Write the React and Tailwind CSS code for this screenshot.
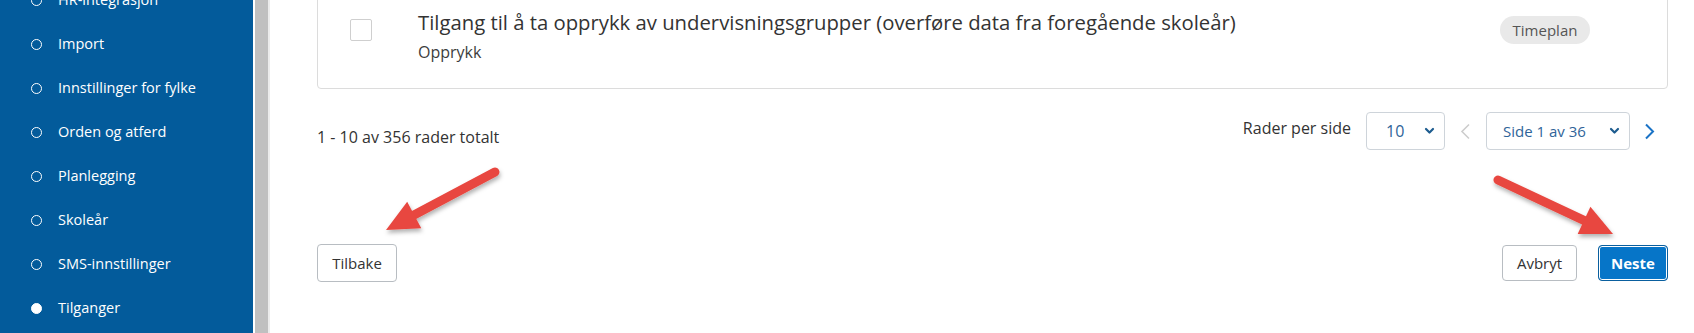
import React from 'react'

const navItems = [
  { label: 'HR-integrasjon' },
  { label: 'Import' },
  { label: 'Innstillinger for fylke' },
  { label: 'Orden og atferd' },
  { label: 'Planlegging' },
  { label: 'Skoleår' },
  { label: 'SMS-innstillinger' },
  { label: 'Tilganger', active: true },
]

// red annotation arrow, from tail to tip
const Arrow = ({ from, to }) => {
  const dx = to[0] - from[0]
  const dy = to[1] - from[1]
  const len = Math.hypot(dx, dy)
  const ux = dx / len
  const uy = dy / len
  const headLen = 32
  const halfW = 15
  const bx = to[0] - ux * headLen
  const by = to[1] - uy * headLen
  const nx = -uy
  const ny = ux
  const lineEnd = [to[0] - ux * (headLen - 4), to[1] - uy * (headLen - 4)]
  return (
    <g filter="url(#arrowShadow)">
      <line
        x1={from[0]}
        y1={from[1]}
        x2={lineEnd[0]}
        y2={lineEnd[1]}
        stroke="#e8473f"
        strokeWidth="9"
        strokeLinecap="round"
      />
      <polygon
        points={`${to[0]},${to[1]} ${bx + nx * halfW},${by + ny * halfW} ${bx - nx * halfW},${by - ny * halfW}`}
        fill="#e8473f"
      />
    </g>
  )
}

const SmallChevron = () => (
  <svg width="11" height="8" viewBox="0 0 11 8" className="shrink-0">
    <polyline points="2,2 5.5,5.5 9,2" fill="none" stroke="#1d5c8f" strokeWidth="2.2" strokeLinecap="round" strokeLinejoin="round" />
  </svg>
)

const Select = ({ value, className }) => (
  <div
    className={`h-[38px] flex items-center justify-between border border-[#ced4da] rounded-[4px] bg-white text-[#2f6499] ${className}`}
  >
    <span>{value}</span>
    <SmallChevron />
  </div>
)

const App = () => {
  return (
    <div className="relative flex h-[333px] w-[1694px] overflow-hidden bg-white font-['Open_Sans',sans-serif] text-[#333]">
      <aside className="w-[253px] shrink-0 bg-[#035b9b] text-white">
        <ul className="mt-[-22px]">
          {navItems.map((item) => (
            <li key={item.label} className="h-[44px] flex items-center pl-[31px] text-[14.5px]">
              <span
                className={`w-[11px] h-[11px] rounded-full border-[1.5px] border-white ${item.active ? 'bg-white' : ''}`}
              />
              <span className="ml-[16px]">{item.label}</span>
            </li>
          ))}
        </ul>
      </aside>
      <div className="w-[2px] shrink-0 bg-white" />
      <div className="w-[13px] shrink-0 bg-[#c0c0c0]" />
      <div className="w-[2px] shrink-0 bg-[#ececec]" />

      <main className="flex-1 flex flex-col pl-[47px] pr-[26px]">
        <div className="mt-[-20px] flex items-start border border-[#dcdcdc] rounded-[4px] pt-[28px] pb-[25px] pl-[32px] pr-[77px]">
          <div className="mt-[10px] w-[22px] h-[22px] shrink-0 border border-[#cfcfcf] rounded-[2px] bg-white" />
          <div className="ml-[46px] flex-1">
            <p className="text-[20.3px] leading-[26px] text-[#333]">
              Tilgang til å ta opprykk av undervisningsgrupper (overføre data fra foregående skoleår)
            </p>
            <p className="mt-[6px] text-[16px] leading-[22px] text-[#3d3d3d]">Opprykk</p>
          </div>
          <span className="mt-[7px] h-[28px] w-[90px] flex items-center justify-center rounded-full bg-[#e9e9e9] text-[15px] text-[#555]">
            Timeplan
          </span>
        </div>

        <div className="mt-[23px] flex justify-between items-start h-[38px]">
          <p className="mt-[14px] text-[16px] leading-[22px] text-[#333]">1 - 10 av 356 rader totalt</p>
          <div className="flex items-center pr-[13px]">
            <span className="text-[16px] text-[#333] mt-[-6px]">Rader per side</span>
            <Select value="10" className="ml-[15px] w-[79px] pl-[19px] pr-[9px] text-[16px]" />
            <svg width="11" height="17" viewBox="0 0 11 17" className="ml-[15px]">
              <polyline points="9,1.5 2,8.5 9,15.5" fill="none" stroke="#cdcdcd" strokeWidth="1.6" />
            </svg>
            <Select value="Side 1 av 36" className="ml-[15px] w-[144px] pl-[16px] pr-[9px] text-[15px]" />
            <svg width="11" height="17" viewBox="0 0 11 17" className="ml-[14px]">
              <polyline points="2,1.5 9,8.5 2,15.5" fill="none" stroke="#1a73c6" strokeWidth="2" />
            </svg>
          </div>
        </div>

        <div className="mt-[94px] flex justify-between items-center">
          <button className="h-[38px] w-[80px] border border-[#b8bdc2] rounded-[4px] bg-white text-[15px] text-[#333]">
            Tilbake
          </button>
          <div className="flex items-center">
            <button className="h-[36px] w-[75px] border border-[#b8bdc2] rounded-[4px] bg-white text-[15px] text-[#333]">
              Avbryt
            </button>
            <button className="ml-[21px] h-[36px] w-[70px] border border-[#0a5f9e] rounded-[4px] bg-[#0675c8] shadow-[inset_0_0_0_1px_white] text-[15px] font-bold text-white">
              Neste
            </button>
          </div>
        </div>
      </main>

      <svg className="absolute inset-0 pointer-events-none" width="1694" height="333">
        <defs>
          <filter id="arrowShadow" x="-20%" y="-20%" width="140%" height="140%">
            <feDropShadow dx="1" dy="3" stdDeviation="2" floodColor="#000" floodOpacity="0.3" />
          </filter>
        </defs>
        <Arrow from={[495, 172]} to={[386, 230]} />
        <Arrow from={[1498, 180]} to={[1613, 234]} />
      </svg>
    </div>
  )
}

export default App
